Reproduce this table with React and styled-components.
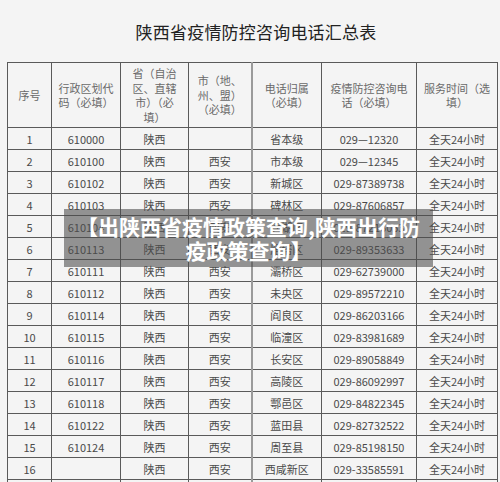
import React from 'react'
import styled, { createGlobalStyle } from "styled-components";

const GlobalStyle = createGlobalStyle`
  html, body {
    margin: 0;
    padding: 0;
    background: #f4f4f4;
  }
  body {
    font-family: "Noto Sans CJK SC", "Noto Sans", sans-serif;
    overflow: hidden;
  }
`;

const COLS = [44, 69, 68, 63, 70, 95, 81];

const HEADERS = [
  ["序号"],
  ["行政区划代", "码（必填）"],
  ["省（自治", "区、直辖", "市）（必", "填）"],
  ["市（地、", "州、盟）", "（必填）"],
  ["电话归属", "（必填）"],
  ["疫情防控咨询电", "话（必填）"],
  ["服务时间（选", "填）"],
];

const ROWS = [
  ["1", "610000", "陕西", "", "省本级", "029—12320"],
  ["2", "610100", "陕西", "西安", "市本级", "029—12345"],
  ["3", "610102", "陕西", "西安", "新城区", "029-87389738"],
  ["4", "610103", "陕西", "西安", "碑林区", "029-87606857"],
  ["5", "610104", "陕西", "西安", "莲湖区", "029-87216053"],
  ["6", "610113", "陕西", "西安", "雁塔区", "029-89353633"],
  ["7", "610111", "陕西", "西安", "灞桥区", "029-62739000"],
  ["8", "610112", "陕西", "西安", "未央区", "029-89572210"],
  ["9", "610114", "陕西", "西安", "阎良区", "029-86203166"],
  ["10", "610115", "陕西", "西安", "临潼区", "029-83981689"],
  ["11", "610116", "陕西", "西安", "长安区", "029-89058849"],
  ["12", "610117", "陕西", "西安", "高陵区", "029-86092997"],
  ["13", "610118", "陕西", "西安", "鄠邑区", "029-84822345"],
  ["14", "610122", "陕西", "西安", "蓝田县", "029-82732522"],
  ["15", "610124", "陕西", "西安", "周至县", "029-85198150"],
  ["16", "", "陕西", "西安", "西咸新区", "029-33585591"],
];

const App = () => {
  return (
    <Page>
      <GlobalStyle />
      <Title>陕西省疫情防控咨询电话汇总表</Title>
      <Sheet>
        <colgroup>
          {COLS.map((w, i) => <col key={i} style={{ width: w }} />)}
        </colgroup>
        <thead>
          <HeadRow>
            {HEADERS.map((lines, i) => (
              <HeadCell key={i}>
                {lines.map((l, j) => <Line key={j}>{l}</Line>)}
              </HeadCell>
            ))}
          </HeadRow>
        </thead>
        <tbody>
          {ROWS.map((r) => (
            <Row key={r[0]}>
              {r.map((c, i) => <Cell key={i}>{c}</Cell>)}
              <Cell>全天24小时</Cell>
            </Row>
          ))}
          {/* next row, cut off by the bottom edge */}
          <Row>
            {COLS.map((_, i) => <Cell key={i} />)}
          </Row>
        </tbody>
      </Sheet>
      <Banner>
        【出陕西省疫情政策查询,陕西出行防<br />疫政策查询】
      </Banner>
    </Page>
  );
};

export default App


const Page = styled.div`
  position: relative;
  width: 500px;
  height: 482px;
  overflow: hidden;
  background: #f4f4f4;
`;

const Title = styled.h1`
  margin: 0;
  height: 62px;
  padding-left: 12px;
  display: flex;
  align-items: center;
  justify-content: center;
  font-size: 17px;
  font-weight: 400;
  color: #222;
  letter-spacing: 0.2px;
`;

const Sheet = styled.table`
  margin-left: 7px;
  width: 491px;
  table-layout: fixed;
  border-collapse: collapse;
  font-size: 11px;
  color: #4a4a4a;
  text-align: center;

  td, th {
    border: 1px solid #5a5a5a;
    padding: 0;
  }
  td:nth-child(4), th:nth-child(4) {
    border-right: 2px solid #9a9a9a;
  }
`;

const HeadRow = styled.tr`
  height: 65px;
`;

const HeadCell = styled.th`
  font-weight: 400;
  color: #6a6a6a;
  line-height: 14.5px;
  vertical-align: middle;
`;

const Line = styled.div`
  white-space: nowrap;
`;

const Row = styled.tr`
  height: 22px;
`;

const Cell = styled.td`
  height: 21px;
  line-height: 20px;
  white-space: nowrap;
`;

const Banner = styled.div`
  position: absolute;
  top: 209px;
  left: 64px;
  width: 369px;
  box-sizing: border-box;
  padding: 5px 4px;
  background: rgba(75, 75, 75, 0.58);
  color: #fff;
  font-size: 21px;
  font-weight: 700;
  line-height: 24px;
  text-align: center;
  white-space: nowrap;
`;
